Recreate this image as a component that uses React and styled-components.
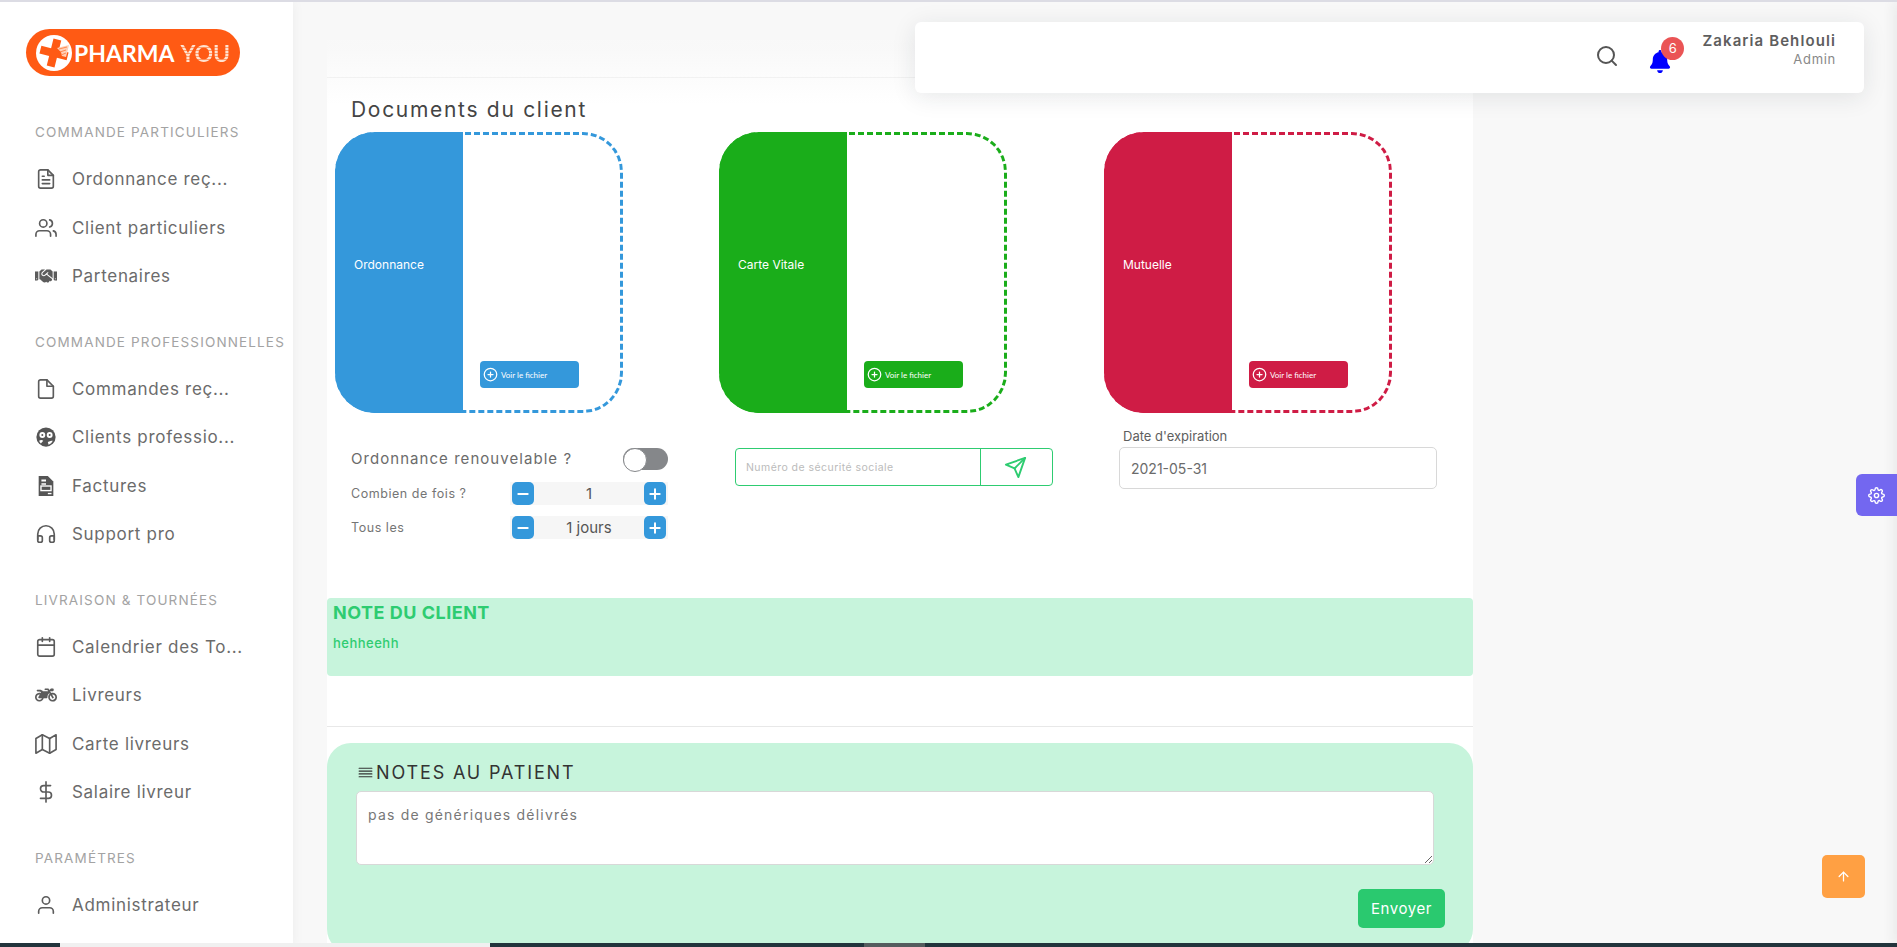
import React from 'react';
import styled, { createGlobalStyle } from 'styled-components';
import {
  FiFileText, FiUsers, FiFile, FiHeadphones, FiCalendar, FiMap, FiDollarSign,
  FiUser, FiSearch, FiSend, FiSettings, FiArrowUp, FiPlus, FiMinus, FiPlusCircle, FiAlignJustify,
} from 'react-icons/fi';
import { FaHandshake, FaMotorcycle, FaBell } from 'react-icons/fa';

const Global = createGlobalStyle`
  html, body { margin: 0; padding: 0; height: 947px; overflow: hidden; background: #f8f8f8; }
  * { box-sizing: border-box; }
  body { font-family: Inter, "Open Sans", "Liberation Sans", sans-serif; color: #666; }
`;

const Page = styled.div`
  position: relative;
  height: 947px;
  overflow: hidden;
  border-top: 2px solid #dcdce4;
  display: flex;
  align-items: flex-start;
`;

const Sidebar = styled.aside`
  width: 293px;
  height: 945px;
  flex: none;
  background: #fff;
  padding: 27px 0 0 35px;
  box-shadow: 0 0 12px rgba(34, 41, 47, 0.05);
  position: relative;
  z-index: 2;
`;

const Logo = styled.div`
  width: 214px;
  height: 47px;
  margin: 0 0 46px -9px;
  background: #ff5a14;
  border-radius: 24px;
  display: flex;
  align-items: center;
  padding-left: 10px;
  font-family: Lato, sans-serif;
  font-weight: 700;
  font-size: 23px;
  color: #fff;
  svg { flex: none; margin-right: 2px; }
`;

const LogoYou = styled.span`
  margin-left: 6px;
  background: repeating-linear-gradient(180deg, #ffe2d0 0 2px, #ff9c6a 2px 3px);
  -webkit-background-clip: text;
  background-clip: text;
  color: transparent;
`;

const Group = styled.div`
  margin-bottom: 31.5px;
`;

const GroupTitle = styled.div`
  height: 20px;
  line-height: 20px;
  margin-bottom: 13px;
  font-size: 13.5px;
  letter-spacing: 1.15px;
  text-transform: uppercase;
  color: #a3a3a3;
  white-space: nowrap;
`;

const Item = styled.div`
  height: 48.4px;
  display: flex;
  align-items: center;
  color: #5c5c5c;
  svg { flex: none; width: 22px; height: 22px; margin-right: 15px; stroke-width: 1.8; }
`;

const ItemLabel = styled.span`
  font-size: 17px;
  letter-spacing: 0.7px;
  color: #6b6b6b;
  white-space: nowrap;
`;

const Main = styled.main`
  flex: 1;
  padding-left: 34px;
  padding-top: 38px;
`;

const Card = styled.section`
  width: 1146px;
  background: #fff;
`;

const CardHead = styled.div`
  height: 38px;
  border-bottom: 1px solid #ececec;
`;

const Title = styled.h2`
  margin: 20px 0 0 24px;
  font-size: 21px;
  line-height: 24px;
  font-weight: 400;
  letter-spacing: 1.7px;
  color: #444;
`;

const Columns = styled.div`
  display: grid;
  grid-template-columns: 384px 385px 385px;
  padding-left: 8px;
`;

const DocGrid = styled(Columns)`
  margin-top: 10px;
`;

const DocCard = styled.div`
  width: 288px;
  height: 281px;
  border: 3px dashed ${(p) => p.$color};
  border-radius: 40px;
  display: flex;
  align-items: flex-end;
`;

const DocLabel = styled.div`
  width: 128px;
  align-self: stretch;
  margin: -3px 0 -3px -3px;
  padding: 0 0 16px 19px;
  display: flex;
  align-items: center;
  background: ${(p) => p.$color};
  border-radius: 40px 0 0 40px;
  color: #fff;
  font-size: 12px;
`;

const FileButton = styled.button`
  width: 99px;
  height: 27px;
  margin: 0 0 22px 17px;
  padding: 0 0 0 3px;
  border: 0;
  border-radius: 4px;
  background: ${(p) => p.$color};
  color: #fff;
  display: flex;
  align-items: center;
  gap: 3px;
  font-family: Lato, sans-serif;
  font-size: 8px;
  font-weight: 400;
  white-space: nowrap;
  svg { width: 15px; height: 15px; }
`;

const FormRow = styled(Columns)`
  margin-top: 15px;
  align-items: start;
`;

const FormCol = styled.div`
  padding: ${(p) => (p.$label ? '0 0 0 15px' : '20px 0 0 16px')};
  display: flex;
  flex-direction: column;
  gap: 11px;
`;

const LineRow = styled.div`
  width: 317px;
  display: flex;
  align-items: center;
  justify-content: space-between;
`;

const ToggleRow = styled(LineRow)`
  margin-bottom: 1px;
`;

const RenewLabel = styled.span`
  padding-bottom: 2px;
  font-size: 15px;
  letter-spacing: 1.05px;
  color: #6b6b6b;
`;

const Toggle = styled.span`
  width: 45px;
  height: 22px;
  border-radius: 11px;
  background: #85878a;
  display: block;
  &::before {
    content: '';
    display: block;
    width: 22px;
    height: 22px;
    border-radius: 50%;
    background: #fff;
    border: 1px solid #85878a;
  }
`;

const SmallLabel = styled.span`
  font-size: 12.5px;
  letter-spacing: 0.55px;
  color: #757575;
`;

const Stepper = styled.div`
  width: 158px;
  height: 23px;
  padding: 0 2px;
  background: #f6f6f6;
  display: flex;
  align-items: center;
  justify-content: space-between;
  font-size: 15px;
  color: #555;
`;

const StepButton = styled.button`
  width: 22px;
  height: 23px;
  padding: 0;
  border: 0;
  border-radius: 5px;
  background: #3498db;
  color: #fff;
  display: flex;
  align-items: center;
  justify-content: center;
  svg { width: 16px; height: 16px; stroke-width: 3; }
`;

const SocialBox = styled.div`
  width: 318px;
  height: 38px;
  border: 1px solid #2ecc71;
  border-radius: 4px;
  display: flex;
`;

const SocialInput = styled.input`
  width: 245px;
  border: 0;
  border-right: 1px solid #2ecc71;
  background: transparent;
  padding: 0 0 0 10px;
  font-family: inherit;
  font-size: 10.5px;
  letter-spacing: 0.45px;
  outline: none;
  &::placeholder { color: #bbb; opacity: 1; }
`;

const SendBox = styled.div`
  flex: 1;
  display: flex;
  align-items: center;
  justify-content: center;
  color: #2ecc71;
  svg { width: 23px; height: 23px; transform: translate(-1px, 0); }
`;

const DateField = styled.div`
  display: flex;
  flex-direction: column;
  gap: 3px;
`;

const DateLabel = styled.label`
  height: 16px;
  line-height: 16px;
  padding-left: 4px;
  font-size: 13px;
  color: #5e5e5e;
`;

const DateInput = styled.input`
  width: 318px;
  height: 42px;
  border: 1px solid #d8d8d8;
  border-radius: 5px;
  padding: 0 0 0 11px;
  font-family: inherit;
  font-size: 14px;
  color: #6b6b6b;
  outline: none;
`;

const ClientNote = styled.div`
  height: 78px;
  margin-top: 59px;
  padding: 5px 6px 0;
  background: #c7f4dc;
  border-radius: 4px;
  color: #2ecc71;
`;

const ClientNoteTitle = styled.div`
  font-size: 18px;
  line-height: 20px;
  font-weight: 700;
  letter-spacing: 0.5px;
`;

const ClientNoteText = styled.div`
  margin-top: 12px;
  font-size: 13px;
  line-height: 16px;
  font-weight: 500;
  letter-spacing: 0.5px;
`;

const Divider = styled.hr`
  margin: 50px 0 16px;
  border: 0;
  border-top: 1px solid #e8e8e8;
`;

const NotesPanel = styled.div`
  height: 210px;
  padding: 18px 28px 0 30px;
  background: #c7f4dc;
  border-radius: 24px;
`;

const NotesTitle = styled.div`
  height: 22px;
  display: flex;
  align-items: center;
  gap: 2px;
  font-size: 18px;
  letter-spacing: 1.85px;
  color: #333;
  svg { width: 17px; height: 17px; stroke-width: 1.6; }
`;

const NotesArea = styled.textarea`
  display: block;
  width: 1078px;
  height: 74px;
  margin: 8px 0 0 -1px;
  padding: 14px 11px;
  border: 1px solid #d8d8d8;
  border-radius: 5px;
  background: #fff;
  font-family: inherit;
  font-size: 14px;
  letter-spacing: 1.2px;
  color: #777;
  outline: none;
`;

const NotesActions = styled.div`
  display: flex;
  justify-content: flex-end;
  margin-top: 24px;
`;

const SendButton = styled.button`
  width: 87px;
  height: 39px;
  border: 0;
  border-radius: 5px;
  background: #2ac96f;
  color: #fff;
  font-family: inherit;
  font-size: 15px;
  letter-spacing: 0.6px;
`;

const HeaderFade = styled.div`
  position: absolute;
  top: 0;
  left: 293px;
  right: 0;
  height: 102px;
  pointer-events: none;
  background: linear-gradient(180deg, rgba(248, 248, 248, 0.95) 44%, rgba(248, 248, 248, 0.46) 73%, rgba(255, 255, 255, 0));
`;

const Navbar = styled.header`
  position: absolute;
  top: 20px;
  left: 915px;
  width: 949px;
  height: 71px;
  padding-right: 28px;
  background: #fff;
  border-radius: 6px;
  box-shadow: 0 4px 24px rgba(34, 41, 47, 0.1);
  display: flex;
  align-items: center;
  justify-content: flex-end;
`;

const SearchIcon = styled(FiSearch)`
  width: 24px;
  height: 24px;
  color: #555;
  margin: -3px 30px 0 0;
`;

const BellWrap = styled.div`
  position: relative;
  width: 22px;
  height: 23px;
  margin: 7px 31px 0 0;
  color: #0000ff;
  svg { width: 22px; height: 23px; display: block; }
`;

const Badge = styled.span`
  position: absolute;
  top: -13px;
  left: 12px;
  width: 23px;
  height: 23px;
  border-radius: 50%;
  background: #ea5455;
  color: #fff;
  font-size: 13px;
  display: flex;
  align-items: center;
  justify-content: center;
`;

const UserBlock = styled.div`
  text-align: right;
  margin-top: -15px;
`;

const UserName = styled.div`
  font-size: 15px;
  line-height: 18px;
  font-weight: 600;
  letter-spacing: 1.1px;
  color: #5e5e5e;
`;

const UserRole = styled.div`
  font-size: 13px;
  line-height: 18px;
  letter-spacing: 0.7px;
  color: #888;
`;

const SettingsTab = styled.div`
  position: absolute;
  top: 472px;
  right: 0;
  width: 41px;
  height: 42px;
  background: #7367f0;
  border-radius: 6px 0 0 6px;
  color: #fff;
  display: flex;
  align-items: center;
  justify-content: center;
  svg { width: 17px; height: 17px; }
`;

const DrawerShadow = styled.div`
  position: absolute;
  top: 0;
  bottom: 0;
  right: -10px;
  width: 10px;
  box-shadow: 0 0 15px rgba(34, 41, 47, 0.12);
`;

const ScrollTop = styled.div`
  position: absolute;
  top: 853px;
  left: 1822px;
  width: 43px;
  height: 43px;
  background: #ffa043;
  border-radius: 5px;
  color: #fff;
  display: flex;
  align-items: center;
  justify-content: center;
  svg { width: 15px; height: 15px; }
`;

const TaskStrip = styled.div`
  position: absolute;
  left: 0;
  right: 0;
  bottom: 0;
  height: 4px;
  z-index: 3;
  background: linear-gradient(90deg, #22343c 0 60px, #f0f0f0 60px 490px, #22343c 490px 864px, #555c5e 864px 925px, #22343c 925px);
`;

const LogoMark = () => (
  <svg width="36" height="36" viewBox="0 0 36 36">
    <circle cx="18" cy="18" r="18" fill="#fff" />
    <g transform="rotate(14 18 18)">
      <path d="M14 4h8v10h10v8H22v10h-8V22H4v-8h10z" fill="#ff5a14" />
    </g>
    <path d="M21 13l12-3-3 12-4-1-1-4z" fill="#ffd0b8" />
    <path d="M23 14l8-2M24 17l6-2M25 20l5-2" stroke="#ff8a52" strokeWidth="1" />
  </svg>
);

const GroupsIcon = () => (
  <svg viewBox="0 0 24 24">
    <circle cx="12" cy="12" r="10.5" fill="#555" />
    <circle cx="8" cy="9.8" r="3.2" fill="#fff" />
    <circle cx="16" cy="9.8" r="3.2" fill="#fff" />
    <circle cx="8" cy="9.8" r="1.1" fill="#555" />
    <circle cx="16" cy="9.8" r="1.1" fill="#555" />
    <path d="M4.5 16c1.6-.8 3.2-.8 4.5 0l-2.6 3c-.9-.8-1.5-1.9-1.9-3zM14 17.5c2-1 4-1.5 5.4-1.5-.9 2-2.5 3.6-4.6 4.4z" fill="#fff" />
  </svg>
);

const InvoiceIcon = () => (
  <svg viewBox="0 0 24 24">
    <path d="M4 1h10l6 6v16H4z" fill="#555" />
    <path d="M7 5h5v2H7zM7 9h5v1.5H7z" fill="#fff" />
    <rect x="6.5" y="12" width="11" height="5" fill="none" stroke="#fff" strokeWidth="1.5" />
    <path d="M14 19.5h4V21h-4z" fill="#fff" />
  </svg>
);

const menu = [
  { title: 'Commande particuliers', items: [
    [FiFileText, 'Ordonnance reç...'],
    [FiUsers, 'Client particuliers'],
    [FaHandshake, 'Partenaires'],
  ] },
  { title: 'Commande professionnelles', items: [
    [FiFile, 'Commandes reç...'],
    [GroupsIcon, 'Clients professio...'],
    [InvoiceIcon, 'Factures'],
    [FiHeadphones, 'Support pro'],
  ] },
  { title: 'Livraison & tournées', items: [
    [FiCalendar, 'Calendrier des To...'],
    [FaMotorcycle, 'Livreurs'],
    [FiMap, 'Carte livreurs'],
    [FiDollarSign, 'Salaire livreur'],
  ] },
  { title: 'Paramétres', items: [[FiUser, 'Administrateur']] },
];

const docs = [
  { label: 'Ordonnance', color: '#3498db' },
  { label: 'Carte Vitale', color: '#1aad1a' },
  { label: 'Mutuelle', color: '#cf1c45' },
];

const Counter = ({ value }) => (
  <Stepper>
    <StepButton><FiMinus /></StepButton>
    {value}
    <StepButton><FiPlus /></StepButton>
  </Stepper>
);

const App = () => (
  <Page>
    <Global />
    <Sidebar>
      <Logo>
        <LogoMark />
        PHARMA
        <LogoYou>YOU</LogoYou>
      </Logo>
      {menu.map((group) => (
        <Group key={group.title}>
          <GroupTitle>{group.title}</GroupTitle>
          {group.items.map(([Icon, label]) => (
            <Item key={label}>
              <Icon />
              <ItemLabel>{label}</ItemLabel>
            </Item>
          ))}
        </Group>
      ))}
    </Sidebar>

    <Main>
      <Card>
        <CardHead />
        <Title>Documents du client</Title>
        <DocGrid>
          {docs.map((doc) => (
            <DocCard key={doc.label} $color={doc.color}>
              <DocLabel $color={doc.color}>{doc.label}</DocLabel>
              <FileButton $color={doc.color}>
                <FiPlusCircle />
                Voir le fichier
              </FileButton>
            </DocCard>
          ))}
        </DocGrid>

        <FormRow>
          <FormCol>
            <ToggleRow>
              <RenewLabel>Ordonnance renouvelable ?</RenewLabel>
              <Toggle />
            </ToggleRow>
            <LineRow>
              <SmallLabel>Combien de fois ?</SmallLabel>
              <Counter value="1" />
            </LineRow>
            <LineRow>
              <SmallLabel>Tous les</SmallLabel>
              <Counter value="1 jours" />
            </LineRow>
          </FormCol>
          <FormCol>
            <SocialBox>
              <SocialInput placeholder="Numéro de sécurité sociale" />
              <SendBox><FiSend /></SendBox>
            </SocialBox>
          </FormCol>
          <FormCol $label>
            <DateField>
              <DateLabel>Date d'expiration</DateLabel>
              <DateInput defaultValue="2021-05-31" />
            </DateField>
          </FormCol>
        </FormRow>

        <ClientNote>
          <ClientNoteTitle>NOTE DU CLIENT</ClientNoteTitle>
          <ClientNoteText>hehheehh</ClientNoteText>
        </ClientNote>

        <Divider />

        <NotesPanel>
          <NotesTitle>
            <FiAlignJustify />
            NOTES AU PATIENT
          </NotesTitle>
          <NotesArea defaultValue="pas de génériques délivrés" />
          <NotesActions>
            <SendButton>Envoyer</SendButton>
          </NotesActions>
        </NotesPanel>
      </Card>
    </Main>

    <HeaderFade />
    <Navbar>
      <SearchIcon />
      <BellWrap>
        <FaBell />
        <Badge>6</Badge>
      </BellWrap>
      <UserBlock>
        <UserName>Zakaria Behlouli</UserName>
        <UserRole>Admin</UserRole>
      </UserBlock>
    </Navbar>
    <DrawerShadow />
    <SettingsTab><FiSettings /></SettingsTab>
    <ScrollTop><FiArrowUp /></ScrollTop>
    <TaskStrip />
  </Page>
);

export default App;
